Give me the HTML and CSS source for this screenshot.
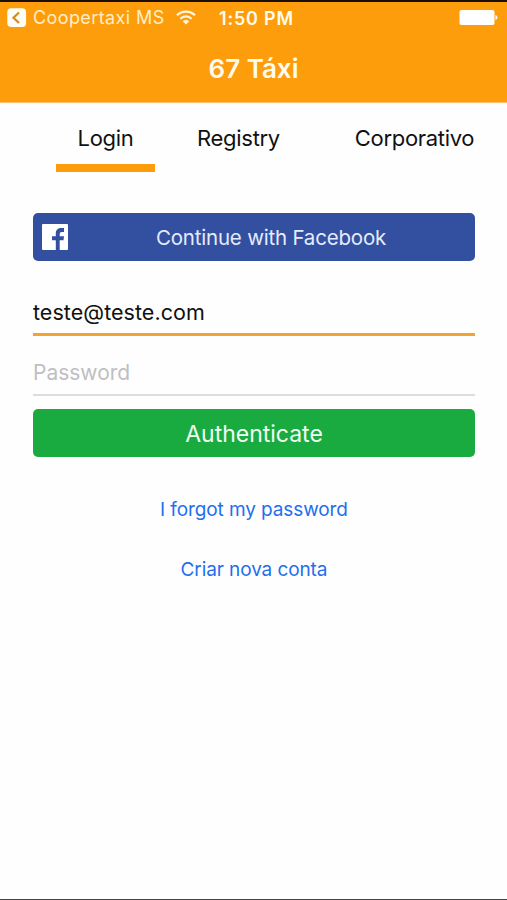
FILE: index.html
```html
<!DOCTYPE html>
<html lang="en">
<head>
  <meta charset="UTF-8">
  <meta name="viewport" content="width=device-width, initial-scale=1.0">
  <title>67 Táxi</title>
  <link rel="stylesheet" href="styles.css">
</head>
<body>
  <header>
    <div class="status-bar">
      <svg class="back-icon" width="20" height="20" viewBox="0 0 20 20">
        <rect x="0.3" y="0.3" width="18.8" height="18.8" rx="4" fill="#fffdf5" />
        <path d="M12 4.5 L6.5 9.7 L12 15" fill="none" stroke="#d98a12" stroke-width="2.2" />
      </svg>
      <span class="app-name">Coopertaxi MS</span>
      <svg class="wifi-icon" width="20" height="15" viewBox="0 0 20 15">
        <g fill="none" stroke="#fff6e0" stroke-width="2.3">
          <path d="M1 5.3 A12.8 12.8 0 0 1 19 5.3" />
          <path d="M4.4 8.7 A8 8 0 0 1 15.6 8.7" />
        </g>
        <path d="M6.7 11.2 A4.8 4.8 0 0 1 13.3 11.2 L10 14.5 Z" fill="#fff6e0" />
      </svg>
      <span class="time">1:50 PM</span>
      <svg class="battery-icon" width="39" height="15" viewBox="0 0 39 15">
        <rect x="0.5" y="0" width="35" height="15" rx="2" fill="#fff" />
        <path d="M36.5 5 Q38.5 5.8 38.5 7.5 Q38.5 9.2 36.5 10 Z" fill="#fff" />
      </svg>
    </div>
    <h1>67 Táxi</h1>
  </header>

  <nav class="tabs">
    <a class="tab active">Login</a>
    <a class="tab">Registry</a>
    <a class="tab">Corporativo</a>
  </nav>

  <main>
    <button class="btn facebook-btn">
      <svg class="facebook-icon" width="26" height="26" viewBox="0 0 26 26">
        <rect width="26" height="26" rx="1" fill="#fff" />
        <path d="M13.8 26 V16.3 H10 V12.3 H13.8 V9.5 C13.8 6 16 4.1 19.3 4.1 H22 V8 H20 C18.3 8 17.7 8.7 17.7 10.1 V12.3 H22 L21.5 16.3 H17.7 V26 Z" fill="#3350a0" />
      </svg>
      <span>Continue with Facebook</span>
    </button>
    <input type="text" class="email" value="teste@teste.com">
    <input type="password" class="password" placeholder="Password">
    <button class="btn auth-btn">Authenticate</button>
    <a class="link forgot">I forgot my password</a>
    <a class="link create">Criar nova conta</a>
  </main>
</body>
</html>
```

FILE: styles.css
```css
* {
  margin: 0;
  padding: 0;
  box-sizing: border-box;
  font-family: 'Inter', sans-serif;
}

body {
  height: 900px;
  background: #fefefe;
  color: #111;
  border-bottom: 1px solid #444;
  overflow: hidden;
}

header {
  height: 103px;
  background: #fe9d0b;
  border-top: 2px solid #1a0d04;
  border-bottom: 1px solid #fcc273;
  color: #fffbf0;
}

.status-bar {
  display: flex;
  align-items: center;
  height: 31px;
  padding-left: 7px;
}

.app-name {
  margin-left: 6px;
  width: 132px;
  font-size: 18px;
  line-height: 30px;
  letter-spacing: 0.4px;
  color: #ffedc8;
  white-space: nowrap;
}

.wifi-icon {
  margin-left: 11px;
}

.time {
  width: 76px;
  margin-left: 23px;
  padding-top: 2px;
  font-size: 18px;
  font-weight: 600;
  letter-spacing: 0.8px;
  white-space: nowrap;
}

.battery-icon {
  margin-left: 164px;
}

h1 {
  text-align: center;
  font-size: 26px;
  font-weight: 600;
  line-height: 72px;
}

.tabs {
  display: grid;
  grid-template-columns: 99px 167px 185px;
  padding-left: 56px;
}

.tab {
  height: 69px;
  font-size: 22px;
  letter-spacing: -0.3px;
  line-height: 70px;
  text-align: center;
}

.tab.active {
  border-bottom: 8px solid #fe9d0b;
}

main {
  display: flex;
  flex-direction: column;
  padding: 41px 32px 0 33px;
}

.btn {
  width: 100%;
  height: 48px;
  border: none;
  border-radius: 5px;
  color: #f0fff4;
}

.facebook-btn {
  display: flex;
  align-items: center;
  padding: 0 1px 0 9px;
  background: #3350a0;
  color: #e4ebfd;
  font-size: 20.5px;
  letter-spacing: -0.2px;
}

.facebook-btn span {
  flex: 1;
}

input {
  width: 100%;
  border: none;
  background: transparent;
  color: #111;
  font-size: 21px;
  outline: none;
}

.email {
  height: 45px;
  margin-top: 30px;
  border-bottom: 3px solid #f3a32f;
  font-size: 21.5px;
  letter-spacing: 0.05px;
}

.password {
  height: 45px;
  margin-top: 15px;
  border-bottom: 2px solid #dcdcdc;
}

.password::placeholder {
  color: #bfbfc3;
}

.auth-btn {
  margin-top: 13px;
  padding-top: 1px;
  background: #19ab40;
  font-size: 23px;
}

.link {
  align-self: center;
  font-size: 19px;
  letter-spacing: -0.1px;
  line-height: 30px;
  color: #1f6fee;
}

.forgot {
  margin-top: 38px;
}

.create {
  margin-top: 30px;
}
```
